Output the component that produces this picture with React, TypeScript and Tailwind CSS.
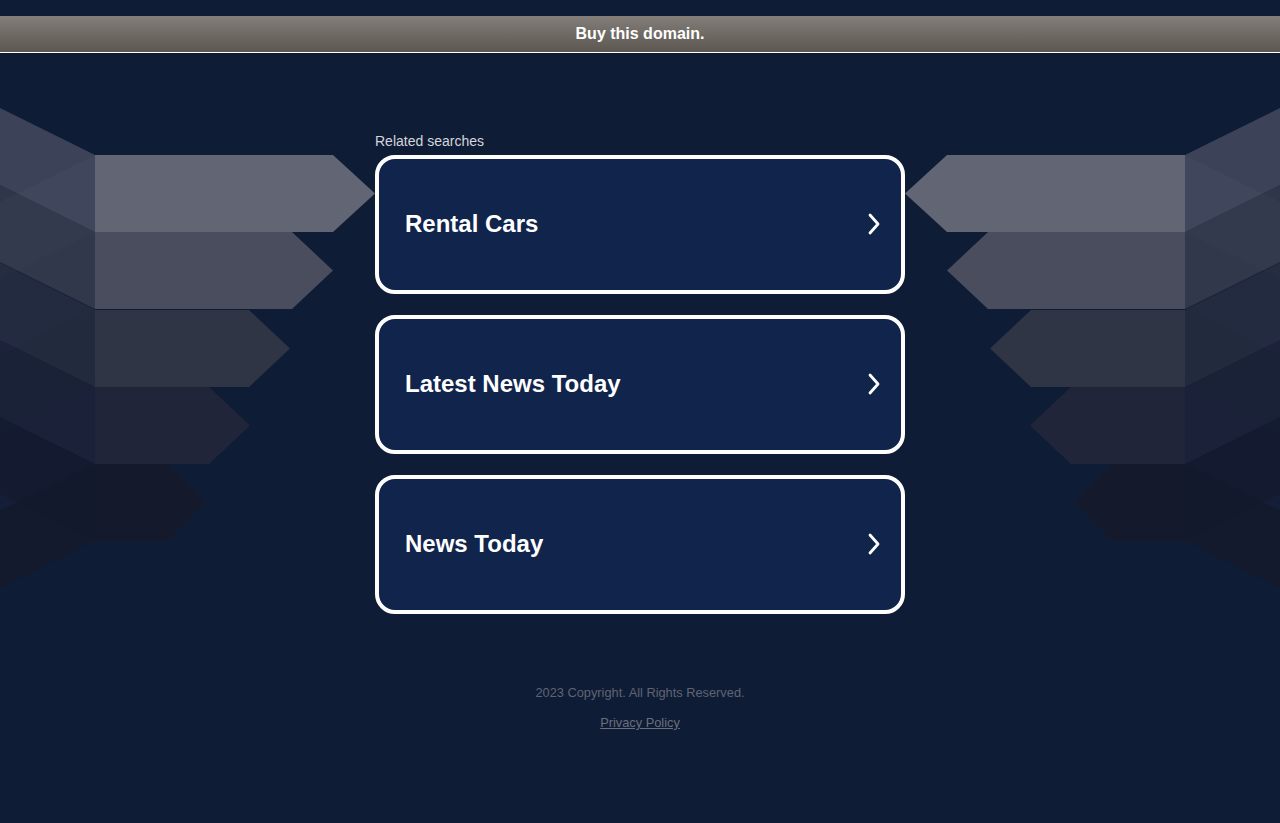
import React from 'react';

const rows = [
  { top: 155, end: 333, tip: 375, color: '#626574', low: 0.12 },
  { top: 232, end: 292, tip: 333, color: '#4a4d5d', low: 0.12 },
  { top: 310, end: 249, tip: 290, color: '#303546', low: 0.15 },
  { top: 387, end: 209, tip: 250, color: '#20253a', low: 0.3 },
  { top: 464, end: 168, tip: 206, color: '#141a2c', low: 0.85 },
];

const searches = ['Rental Cars', 'Latest News Today', 'News Today'];

function Arrows() {
  return (
    <g>
      {rows.map((r) => {
        const b = r.top + 77;
        const mid = r.top + 38.5;
        return (
          <g key={r.top}>
            <polygon points={`0,${r.top - 47} 95,${r.top} 95,${b} 0,${b - 47}`} fill={r.color} opacity={0.55} />
            <polygon points={`0,${r.top + 47} 95,${r.top} 95,${b} 0,${b + 47}`} fill={r.color} opacity={r.low} />
            <polygon points={`95,${r.top} ${r.end},${r.top} ${r.tip},${mid} ${r.end},${b} 95,${b}`} fill={r.color} />
          </g>
        );
      })}
    </g>
  );
}

function Backdrop() {
  return (
    <svg className="absolute left-0 top-0 w-[1280px] h-[823px] pointer-events-none" viewBox="0 0 1280 823">
      <Arrows />
      <g transform="translate(1280,0) scale(-1,1)">
        <Arrows />
      </g>
    </svg>
  );
}

export default function App() {
  return (
    <div className="relative min-h-[823px] bg-[#0f1c36] font-['Liberation_Sans',Arial,sans-serif] overflow-hidden">
      <Backdrop />

      {/* Top bar */}
      <div className="relative pt-4">
        <div className="h-[37px] flex items-center justify-center bg-gradient-to-b from-[#837e79] to-[#5d5752] border-b border-white">
          <span className="text-white font-bold text-[16px]">Buy this domain.</span>
        </div>
      </div>

      {/* Related searches */}
      <div className="relative w-[530px] mx-auto pt-[80px]">
        <p className="text-[14px] leading-4 text-[#d4d6dc] mb-[6px]">Related searches</p>
        <div className="flex flex-col gap-[21px]">
          {searches.map((s) => (
            <a
              key={s}
              href="#"
              className="h-[139px] flex items-center justify-between pl-[26px] pr-[20px] pb-[2px] bg-[#11244c] border-4 border-white rounded-[20px]"
            >
              <span className="text-white font-bold text-[24px]">{s}</span>
              <svg width="14" height="22" viewBox="0 0 14 22" fill="none">
                <polyline points="3,2 11,11 3,20" stroke="white" strokeWidth="2.8" strokeLinecap="round" strokeLinejoin="round" />
              </svg>
            </a>
          ))}
        </div>
      </div>

      {/* Footer */}
      <div className="relative flex flex-col items-center pt-[71px] text-[12.8px] text-[#5f6473]">
        <p className="leading-4">2023 Copyright. All Rights Reserved.</p>
        <a href="#" className="underline leading-4 mt-[14px] text-[#6b6f7c]">Privacy Policy</a>
      </div>
    </div>
  );
}
